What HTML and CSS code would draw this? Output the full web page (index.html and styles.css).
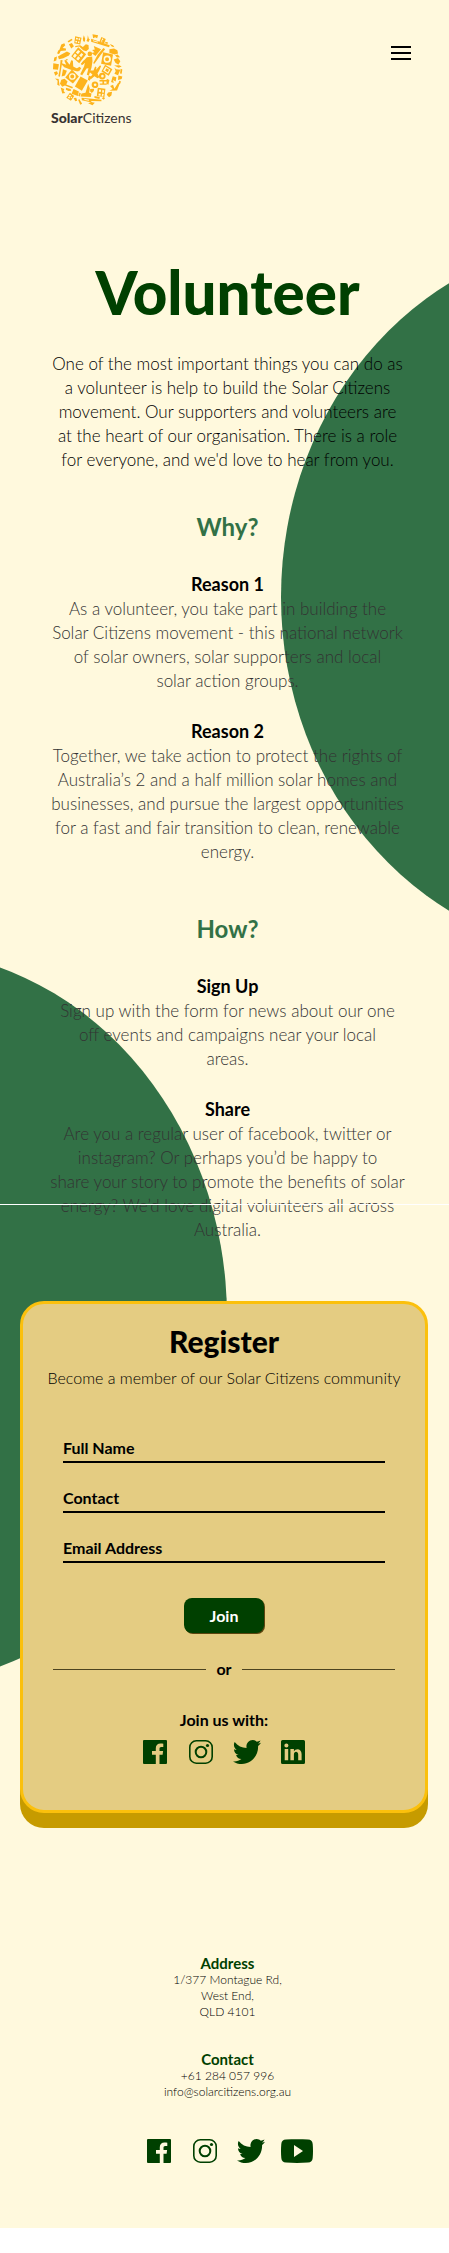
FILE: index.html
```html
<!DOCTYPE html>
<html lang="en">
<head>
<meta charset="utf-8">
<meta name="viewport" content="width=device-width, initial-scale=1">
<title>Volunteer | Solar Citizens</title>
<link rel="stylesheet" href="styles.css">
</head>
<body>
<svg class="sprite" aria-hidden="true">
  <symbol id="facebook" viewBox="0 0 24 24"><path fill-rule="evenodd" d="M1 0h22a1 1 0 0 1 1 1v22a1 1 0 0 1-1 1h-6.500v-9.300h3.100l.5-3.600h-3.600V8.800c0-1.100.4-1.800 1.800-1.800h2V3.700c-.8-.1-1.700-.2-2.700-.2-3 0-4.800 1.700-4.800 4.800v2.800H9v3.600h3.800V24H1a1 1 0 0 1-1-1V1a1 1 0 0 1 1-1z"/></symbol>
  <symbol id="instagram" viewBox="0 0 24 24"><g fill="none" stroke="currentColor"><rect x=".8" y=".8" width="22.400" height="22.400" rx="6.500" stroke-width="1.600"/><circle cx="12" cy="12" r="5.300" stroke-width="2"/></g><circle cx="18.500" cy="5.500" r="1.600"/></symbol>
  <symbol id="twitter" viewBox="0 0 28 24"><path d="M28 2.800a11 11 0 0 1-2.900 3.100C25.500 15.500 18.500 24 8.800 24 5.600 24 2.500 23.100 0 21.400c3.100.3 6-.5 8.400-2.300a5.800 5.800 0 0 1-5.300-4.100c.9.200 1.700.1 2.500-.1C2.800 14.300 1 11.900 1 9.200c.8.400 1.700.7 2.600.7C.9 8 .2 4.500 1.700 2c2.900 3.700 7.200 6 11.900 6.100C12.700 4 15.500 0 19.700 0c1.600 0 3.100.7 4.100 1.800 1.300-.3 2.500-.8 3.700-1.400a5.900 5.900 0 0 1-2.500 3.200c1.100-.1 2.100-.4 3-.8z"/></symbol>
  <symbol id="linkedin" viewBox="0 0 24 24"><path fill-rule="evenodd" d="M1.500 0h21A1.500 1.500 0 0 1 24 1.500v21a1.500 1.500 0 0 1-1.500 1.500h-21A1.500 1.500 0 0 1 0 22.500v-21A1.500 1.500 0 0 1 1.500 0zM3.700 9.100v11.200h3.500V9.100zM5.400 3.500a2 2 0 1 0 0 4.100 2 2 0 0 0 0-4.100zM9.400 9.100v11.200h3.500v-5.800c0-3.600 4.300-3.400 4.300 0v5.800h3.400v-6.400c0-5.500-5.800-6-7.700-2.700V9.100z"/></symbol>
  <symbol id="youtube" viewBox="0 0 32 24"><path fill-rule="evenodd" d="M5 .5C12 0 20 0 27 .5c3 .2 4.400 1.500 4.700 4.500.4 4.500.4 9.500 0 14-.3 3-1.700 4.300-4.700 4.500-7 .6-15 .6-22 0C2 23.300.6 22 .3 19c-.4-4.500-.4-9.500 0-14C.6 2 2 .7 5 .5zM13 6v12l9-6z"/></symbol>
</svg>

<div class="page">
  <header class="header">
    <a class="logo" href="#" aria-label="Solar Citizens home">
      <svg class="logo-mark" viewBox="154 98 220 220" aria-hidden="true">
        <g class="logo-shapes">
          <!-- person -->
          <circle cx="271" cy="161" r="7"/>
          <path d="M262 171l16-2 1 14-3 20-8 23-6-2 5-20-6 1-13 20-6-3 12-24 2-10-9 7-3-4z"/>
          <!-- panels -->
          <path fill-rule="evenodd" d="M236 141l24 21-21 27-24-21zM236 149l-7 8 6 5 7-8zM246 158l-7 8 6 5 6-8zM226 160l-6 8 6 5 6-8zM236 168l-6 8 6 5 6-8z"/>
          <path fill-rule="evenodd" d="M311 156l30 7-6 34-30-6zM323 166a11 11 0 1 0 1 22 11 11 0 0 0-1-22zm0 5a6 6 0 1 1 0 12 6 6 0 0 1 0-12z"/>
          <path fill-rule="evenodd" d="M217 208l21 21-18 21-23-18zM218 219a10 10 0 1 0 1 20 10 10 0 0 0-1-20zm0 4a6 6 0 1 1 0 12 6 6 0 0 1 0-12z"/>
          <path d="M243 229l22 12-18 31-21-13z"/>
          <path fill-rule="evenodd" d="M317 194l22 13-11 20-22-13zM319 199l-8 12 15 10 7-12zM321 204l8 5-4 7-8-5z"/>
          <path fill-rule="evenodd" d="M295 263l23 3-3 25-23-3zM299 268l-1 7 6 1 1-7zm10 1l-1 8 5 1 1-7zM298 280l-1 6 6 1 1-6zm10 1l-1 7 4 1 2-7z"/>
          <path fill-rule="evenodd" d="M227 108l19 4-4 21-18-4zM230 112l-1 5 5 1 1-5zm8 1l-1 6 4 1 1-5zM228 121l-1 5 5 1 1-5zm8 2l-1 5 4 1 1-5z"/>
          <path fill-rule="evenodd" d="M211 278l13 10-10 14-14-9zM211 283l-4 4 4 3 4-4zM207 290l-2 3 4 3 3-4zM216 289l-3 4 3 2 2-4z"/>
          <path fill-rule="evenodd" d="M306 110l13 6-5 14-14-6zM308 114l-1 4 3 2 2-4zM305 120l-1 3 4 1 1-3z"/>
          <!-- hands and plugs -->
          <path d="M187 189l13 5-6-13 5-2 11 15 5-14 5 2 1 17 17 9-4 6-20-5-20-8-8-8z"/>
          <path d="M202 154l10 5-4 7-17 8-13 3-3-8 10-6z"/>
          <path d="M282 211l5-12 4 2-1 8 12-14 3 3-6 14-5 8 6 11-6 3-9-6-10 9-5-3 9-11-10-8 3-4z"/>
          <path d="M250 140l9-8 8 2 1 12-8 7-9-3-12-11-12 2v-4l15-2z"/>
          <path d="M185 239l10-3 9 8-4 9 20 8-2 4-22-9-8 4-7-9z"/>
          <path d="M266 251l5 14-2 13 7 2-2 11-31-2 3-9 12-2z"/>
          <!-- tools and long bars -->
          <path fill-rule="evenodd" d="M275 115l56 20-2 6-54-17zM280 120l1 3 14 4 1-3z"/>
          <path fill-rule="evenodd" d="M246 293l31 3 29 3v5l-29-1-4 4-26-6zM254 296l1 4 13 2 1-3z"/>
          <path d="M312 143l5 4-14 18-18 26-4-2 14-26z"/>
          <path d="M283 137l22 10-17 20-12-9 9-2-7-7 8-1z"/>
          <path d="M183 179l6 1-5 29-3 21-5-2 4-19z"/>
          <!-- gears -->
          <path fill-rule="evenodd" d="M287 244a10 10 0 1 1-1 20 10 10 0 0 1 1-20zm0 6a4 4 0 1 0 0 8 4 4 0 0 0 0-8z"/>
          <path fill-rule="evenodd" d="M309 218a10 10 0 1 1-1 20 10 10 0 0 1 1-20zm0 6a4 4 0 1 0 0 8 4 4 0 0 0 0-8z"/>
          <path d="M300 240h23v4h-9v6h8v4h-21v-4h8v-6h-9z"/>
          <!-- rim fragments -->
          <path d="M253 105l4 10-1 9-5-1-1-8zM265 105l3 10 3 2-4 8-6-3 3-8zM279 102l17 3-3 9-6-3-6 3zM204 123l12-8 3 4-12 8zM185 133l9-4 3 6-8 8 10 2v6l-17 1-4 9-5-1 7-13zM208 132l9-4 6 10-8 7zM331 131l10 4 4 6-8-2zM330 147l14-2 10 5 2 10-10 3-16-5z"/>
          <path d="M161 189l17 3-3 17-15-2zM163 216l9-3 3 8-8 6zM190 207l12 5-6 14-10 3zM166 235l11 2 3 21-7-4 1-12zM183 262l11 5-2 6 5 6-9 1zM199 263l14 4 2 5-8 1-8-4zM222 267l16 7-3 14-19-7z"/>
          <path d="M222 294l8-1 3 9-6 2zM239 297l9 14-6 3-6-14zM266 310l9-4 11 2-7 8zM272 267l12-1-1 7-6 6-5-5zM326 277l12-2-2 11-7 6-7-8zM312 291l5 3-4 5-6-4zM285 288l16 3-1 6-15-3z"/>
          <path d="M343 178l13-5 7 10-6 11-9-6zM345 202l5 5 13 2-7 16-11-4 4-8zM364 206l5 2-2 13-5-1zM340 228l11 3-2 13-8-4 2 9-8-3zM357 226l12 3-2 8-11 3zM332 258l9-4 4 12 11-17 5 2-8 20-23 1 10-5zM360 242l5 2-3 8-5-2zM344 196l16-1 7 4-9 4z"/>
          <path d="M176 150l7 2-4 8-6-1zM164 172l8-3-2 12-8 3zM198 176l8 2-5 4zM246 190l6-9 5 3-7 10zM230 206l10-6 5 4-7 10zM268 226l8 4-5 12-6-3zM322 236l8 4-3 14-6-3zM240 277l4 3-3 9-5-2zM347 165l8-2 7 8-9 1zM318 124l8 3-2 4-7-2z"/>
        </g>
      </svg>
      <span class="logo-name"><b>Solar</b>Citizens</span>
    </a>
    <button class="menu" type="button" aria-label="Open menu"><span></span><span></span><span></span></button>
  </header>

  <main>
    <section class="content">
      <h1>Volunteer</h1>
      <p class="intro">One of the most important things you can do as<br>a volunteer is help to build the Solar Citizens<br>movement. Our supporters and volunteers are<br>at the heart of our organisation. There is a role<br>for everyone, and we'd love to hear from you.</p>

      <h2>Why?</h2>
      <h3>Reason 1</h3>
      <p>As a volunteer, you take part in building the<br>Solar Citizens movement - this national network<br>of solar owners, solar supporters and local<br>solar action groups.</p>
      <h3>Reason 2</h3>
      <p>Together, we take action to protect the rights of<br>Australia’s 2 and a half million solar homes and<br>businesses, and pursue the largest opportunities<br>for a fast and fair transition to clean, renewable<br>energy.</p>

      <h2 class="how">How?</h2>
      <h3>Sign Up</h3>
      <p>Sign up with the form for news about our one<br>off events and campaigns near your local<br>areas.</p>
      <h3>Share</h3>
      <p>Are you a regular user of facebook, twitter or<br>instagram? Or perhaps you’d be happy to<br>share your story to promote the benefits of solar<br>energy? We’d love digital volunteers all across<br>Australia.</p>
    </section>

    <section class="card">
      <h2 class="card-title">Register</h2>
      <p class="card-lead">Become a member of our Solar Citizens community</p>
      <form class="form">
        <input type="text" name="name" placeholder="Full Name" aria-label="Full Name">
        <input type="text" name="contact" placeholder="Contact" aria-label="Contact">
        <input type="email" name="email" placeholder="Email Address" aria-label="Email Address">
        <button class="join" type="submit">Join</button>
      </form>
      <div class="divider">or</div>
      <p class="join-with">Join us with:</p>
      <div class="social">
        <a href="#" aria-label="Facebook"><svg class="icon"><use href="#facebook"/></svg></a>
        <a href="#" aria-label="Instagram"><svg class="icon"><use href="#instagram"/></svg></a>
        <a href="#" aria-label="Twitter"><svg class="icon icon-twitter"><use href="#twitter"/></svg></a>
        <a href="#" aria-label="LinkedIn"><svg class="icon"><use href="#linkedin"/></svg></a>
      </div>
    </section>
  </main>

  <footer class="footer">
    <h2>Address</h2>
    <p>1/377 Montague Rd,<br>West End,<br>QLD 4101</p>
    <h2>Contact</h2>
    <p>+61 284 057 996<br><a href="mailto:info@solarcitizens.org.au">info@solarcitizens.org.au</a></p>
    <div class="social">
      <a href="#" aria-label="Facebook"><svg class="icon"><use href="#facebook"/></svg></a>
      <a href="#" aria-label="Instagram"><svg class="icon"><use href="#instagram"/></svg></a>
      <a href="#" aria-label="Twitter"><svg class="icon icon-twitter"><use href="#twitter"/></svg></a>
      <a href="#" aria-label="YouTube"><svg class="icon icon-youtube"><use href="#youtube"/></svg></a>
    </div>
  </footer>
</div>
</body>
</html>
```
FILE: styles.css
```css
* { box-sizing: border-box; }

body {
  margin: 0;
  background: #fff;
  color: #000;
  font-family: Lato, "Open Sans", sans-serif;
  font-size: 17px;
  line-height: 24px;
}

h1, h2, h3, p { margin: 0; }
a { color: inherit; text-decoration: none; }

.sprite { position: absolute; width: 0; height: 0; }

.page {
  position: relative;
  z-index: 0;
  overflow: hidden;
  padding-bottom: 65px;
  background: #fff9dd;
}

/* Green discs behind the content */
.page::before,
.page::after {
  content: "";
  position: absolute;
  z-index: -1;
  width: 654px;
  border-radius: 50%;
  background: #327146;
}
.page::before { top: 238px; left: 281px; height: 718px; }
.page::after { top: 950px; left: -427px; height: 734px; }

.header {
  display: flex;
  justify-content: space-between;
  align-items: flex-start;
  padding: 33px 38px 0 51px;
}
.logo { display: flex; flex-direction: column; color: #383332; }
.logo-mark { width: 73px; height: 73px; }
.logo-shapes { fill: #fdb31c; }
.logo-name { font-size: 14px; line-height: 24px; font-weight: 400; }
.logo-name b { font-weight: 900; }

.menu {
  display: flex;
  flex-direction: column;
  gap: 4px;
  margin-top: 13px;
  padding: 0;
  border: 0;
  background: none;
}
.menu span { width: 20px; height: 2px; background: #000; }

.content {
  position: relative;
  padding: 128px 32px 0 38px;
  text-align: center;
}
/* White rule that runs across the last paragraph */
.content::after {
  content: "";
  position: absolute;
  left: 0;
  right: 0;
  bottom: 37px;
  height: 1px;
  background: #fff;
}
.content p { color: #333; font-weight: 300; white-space: nowrap; }
.content .intro { color: #000; }
.content h2 { margin: 39px 0 29px; color: #327146; font-size: 24px; line-height: 32px; font-weight: 700; }
.content .how { margin-top: 49px; }
.content h3 { margin-bottom: 1px; font-size: 18px; line-height: 24px; font-weight: 700; }
.content p + h3 { margin-top: 26px; }
h1 { margin-bottom: 26px; color: #004000; font-size: 60px; line-height: 68px; font-weight: 900; }

.card {
  margin: 59px 21px 0 20px;
  padding: 19px 20px 46px;
  border: 3px solid #fbc00c;
  border-radius: 24px;
  background: #e4cc82;
  box-shadow: 0 15px 0 #c69b00;
  text-align: center;
}
.card-title { margin-bottom: 7px; font-size: 30px; line-height: 36px; font-weight: 900; }
.card-lead { font-size: 16px; font-weight: 300; white-space: nowrap; }

.form { display: flex; flex-direction: column; gap: 20px; padding: 43px 20px 0; }
.form input {
  width: 100%;
  height: 30px;
  padding: 0;
  border: 0;
  border-bottom: 2px solid #000;
  border-radius: 0;
  background: none;
  font: 700 16px/24px Lato, "Open Sans", sans-serif;
}
.form input::placeholder { color: #000; opacity: 1; }
.join {
  align-self: center;
  width: 80px;
  height: 35px;
  margin-top: 15px;
  padding: 0;
  border: 0;
  border-radius: 8px;
  background: #004000;
  box-shadow: 1px 1px 0 #5c4510;
  color: #fff;
  font: 700 16px/24px Lato, "Open Sans", sans-serif;
}
.divider { display: flex; align-items: center; gap: 10px; margin-top: 24px; padding: 0 10px; font-size: 16px; font-weight: 700; }
.divider::before,
.divider::after { content: ""; flex: 1; height: 1px; background: #4c431f; }
.join-with { margin-top: 27px; font-size: 16px; font-weight: 700; }

.social { display: flex; justify-content: center; color: #004000; }
.card .social { margin-top: 8px; }
.social a { display: flex; justify-content: center; width: 46px; }
.icon { width: 24px; height: 24px; fill: currentColor; }
.icon-twitter { width: 28px; }
.icon-youtube { width: 32px; }

.footer { padding: 141px 32px 0 38px; text-align: center; }
.footer h2 { color: #004000; font-size: 15px; line-height: 18px; font-weight: 700; }
.footer p { font-size: 12px; line-height: 16px; font-weight: 300; }
.footer p + h2 { margin-top: 30px; }
.footer .social { margin-top: 39px; }
```
